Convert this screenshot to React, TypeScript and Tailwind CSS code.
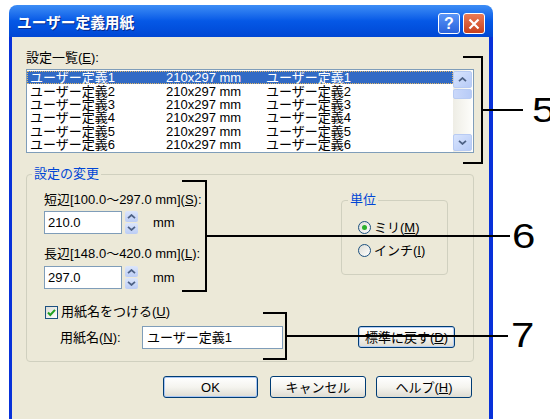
import type { ReactNode } from 'react'

const rows = [1, 2, 3, 4, 5, 6]

function Mn({ children }: { children: ReactNode }) {
  return <span className="underline underline-offset-[1px]">{children}</span>
}

function Chevron({ up = false }: { up?: boolean }) {
  return (
    <svg width="9" height="5" viewBox="0 0 9 5" className={up ? '' : 'rotate-180'}>
      <path d="M1 4.2 L4.5 1 L8 4.2" fill="none" stroke="#4D6185" strokeWidth="1.7" />
    </svg>
  )
}

function XpButton({ className = '', children }: { className?: string; children: ReactNode }) {
  return (
    <button
      type="button"
      className={`flex h-[22px] items-center justify-center rounded-[3px] border border-[#003C74] bg-linear-to-b from-white via-[#F5F4EF] to-[#DEDCD2] text-[13px] leading-none text-black ${className}`}
    >
      {children}
    </button>
  )
}

function Spinner() {
  return (
    <div className="ml-[3px] flex h-[23px] w-[13px] flex-col gap-[1px]">
      <span className="flex flex-1 items-center justify-center rounded-[2px] bg-linear-to-b from-[#DCE6FB] to-[#BCCDF5]">
        <Chevron up />
      </span>
      <span className="flex flex-1 items-center justify-center rounded-[2px] bg-linear-to-b from-[#DCE6FB] to-[#BCCDF5]">
        <Chevron />
      </span>
    </div>
  )
}

function Radio({ checked, children }: { checked?: boolean; children: ReactNode }) {
  return (
    <div className="flex h-[13px] items-center">
      <span className="flex h-[13px] w-[13px] items-center justify-center rounded-full border border-[#1C5180] bg-linear-to-br from-[#DCDCD5] to-white">
        {checked ? <span className="h-[5px] w-[5px] rounded-full bg-[#2BB02B]" /> : null}
      </span>
      <span className="ml-[3px] leading-[13px]">{children}</span>
    </div>
  )
}

export default function App() {
  return (
    <div className="relative h-[419px] w-[550px] overflow-hidden bg-white font-['Liberation_Sans','Noto_Sans_CJK_JP',sans-serif] text-[13px] text-black">
      <div className="ml-[9px] mt-[5px] w-[484px]">
        {/* Title bar */}
        <div className="flex h-[32px] items-start rounded-t-[8px] bg-linear-to-b from-[#3D8DF5] via-[#0558E6] to-[#0047D4] pl-[8px] pr-[8px]">
          <span className="mt-[9px] text-[14.7px] font-bold leading-[18px] text-white [text-shadow:1px_1px_0_#0A2A8A]">
            ユーザー定義用紙
          </span>
          <div className="ml-auto mt-[8px] flex gap-[3px]">
            <span className="flex h-[21px] w-[22px] items-center justify-center rounded-[3px] border border-white bg-linear-to-b from-[#5A95F7] to-[#2A62DC] text-[16px] font-bold leading-none text-white">
              ?
            </span>
            <span className="flex h-[21px] w-[22px] items-center justify-center rounded-[3px] border border-white bg-linear-to-b from-[#EB7A55] to-[#C7401C]">
              <svg width="12" height="12" viewBox="0 0 12 12">
                <path d="M1.5 1.5 L10.5 10.5 M10.5 1.5 L1.5 10.5" stroke="white" strokeWidth="2.2" />
              </svg>
            </span>
          </div>
        </div>

        {/* Client area */}
        <div className="h-[400px] border-l-[3px] border-r-[4px] border-[#0831D9] bg-[#ECE9D8] pl-[14px] pr-[15px] pt-[14px]">
          <div className="leading-[14px]">
            設定一覧(<Mn>E</Mn>):
          </div>

          {/* List box */}
          <div className="mt-[4px] flex h-[84px] border border-[#7F9DB9] bg-white">
            <div className="flex-1 pt-[1px]">
              {rows.map((n) => (
                <div
                  key={n}
                  className={`flex h-[13.4px] items-center leading-[13px] ${
                    n === 1 ? 'bg-[#316AC5] text-white outline-1 -outline-offset-1 outline-dotted outline-[#E2B868]' : ''
                  }`}
                >
                  <span className="w-[139px] pl-[3px]">ユーザー定義{n}</span>
                  <span className="w-[100px]">210x297 mm</span>
                  <span>ユーザー定義{n}</span>
                </div>
              ))}
            </div>
            <div className="mr-[1px] flex w-[19px] flex-col bg-linear-to-r from-[#EEEDE5] to-[#FDFDFA] py-[1px]">
              <span className="flex h-[17px] items-center justify-center rounded-[2px] border border-[#B8CBF3] bg-linear-to-br from-[#D8E4FD] to-[#B7CBF7]">
                <Chevron up />
              </span>
              <span className="mt-[1px] h-[10px] rounded-[2px] border border-[#B8CBF3] bg-linear-to-r from-[#CAD8FA] to-[#B7CBF7]" />
              <span className="flex-1" />
              <span className="flex h-[17px] items-center justify-center rounded-[2px] border border-[#B8CBF3] bg-linear-to-br from-[#D8E4FD] to-[#B7CBF7]">
                <Chevron />
              </span>
            </div>
          </div>

          {/* Settings group */}
          <fieldset className="mt-[14px] rounded-[4px] border border-[#D0D0BF] p-0">
            <legend className="ml-[5px] px-[2px] leading-[14px] text-[#0046D5]">設定の変更</legend>
            <div className="pb-[12px] pl-[17px]">
              <div className="flex">
                <div>
                  <div className="mt-[12px] leading-[14px]">
                    短辺[100.0〜297.0 mm](<Mn>S</Mn>):
                  </div>
                  <div className="mt-[4px] flex items-center">
                    <div className="flex h-[23px] w-[78px] items-center border border-[#7F9DB9] bg-white pl-[3px]">210.0</div>
                    <Spinner />
                    <span className="ml-[15px]">mm</span>
                  </div>
                  <div className="mt-[13px] leading-[14px]">
                    長辺[148.0〜420.0 mm](<Mn>L</Mn>):
                  </div>
                  <div className="mt-[5px] flex items-center">
                    <div className="flex h-[23px] w-[78px] items-center border border-[#7F9DB9] bg-white pl-[3px]">297.0</div>
                    <Spinner />
                    <span className="ml-[15px]">mm</span>
                  </div>
                </div>

                <fieldset className="ml-auto mr-[25px] mt-[12px] h-[82px] w-[107px] rounded-[4px] border border-[#D0D0BF] p-0">
                  <legend className="ml-[6px] px-[2px] leading-[14px] text-[#0046D5]">単位</legend>
                  <div className="pl-[16px]">
                    <div className="mt-[14px]">
                      <Radio checked>
                        ミリ(<Mn>M</Mn>)
                      </Radio>
                    </div>
                    <div className="mt-[10px]">
                      <Radio>
                        インチ(<Mn>I</Mn>)
                      </Radio>
                    </div>
                  </div>
                </fieldset>
              </div>

              <div className="mt-[16px] flex h-[14px] items-center">
                <span className="ml-[1px] flex h-[13px] w-[13px] items-center justify-center border border-[#1C5180] bg-linear-to-br from-[#DCDCD5] to-white">
                  <svg width="11" height="11" viewBox="0 0 11 11">
                    <path d="M2 5.5 L4.3 8 L9 2.8" fill="none" stroke="#21A121" strokeWidth="2" />
                  </svg>
                </span>
                <span className="ml-[3px] leading-[14px]">
                  用紙名をつける(<Mn>U</Mn>)
                </span>
              </div>

              <div className="mt-[7px] flex items-start">
                <span className="ml-[16px] flex h-[23px] w-[82px] items-center">
                  用紙名(<Mn>N</Mn>):
                </span>
                <div className="flex h-[23px] w-[141px] items-center border border-[#7F9DB9] bg-white pl-[4px]">ユーザー定義1</div>
                <XpButton className="ml-[75px] h-[21px] w-[97px] shadow-[inset_0_0_0_1px_#B4CDF5]">
                  標準に戻す(<Mn>D</Mn>)
                </XpButton>
              </div>
            </div>
          </fieldset>

          {/* Dialog buttons */}
          <div className="mt-[14px] flex pl-[137px]">
            <XpButton className="w-[95px] shadow-[inset_0_0_0_1px_#A9C6F4]">OK</XpButton>
            <XpButton className="ml-[12px] w-[96px]">キャンセル</XpButton>
            <XpButton className="ml-[10px] w-[96px]">
              ヘルプ(<Mn>H</Mn>)
            </XpButton>
          </div>
        </div>
      </div>

      {/* Callout 5 */}
      <div className="absolute left-[463px] top-[56px] h-[2px] w-[20px] bg-black" />
      <div className="absolute left-[481px] top-[56px] h-[108px] w-[2px] bg-black" />
      <div className="absolute left-[463px] top-[162px] h-[2px] w-[20px] bg-black" />
      <div className="absolute left-[481px] top-[109px] h-[2px] w-[42px] bg-black" />
      <div className="absolute left-[532px] top-[92px] origin-left scale-x-[1.2] text-[35px] leading-[35px]">5</div>

      {/* Callout 6 */}
      <div className="absolute left-[182px] top-[180px] h-[2px] w-[25px] bg-black" />
      <div className="absolute left-[205px] top-[180px] h-[112px] w-[2px] bg-black" />
      <div className="absolute left-[182px] top-[290px] h-[2px] w-[25px] bg-black" />
      <div className="absolute left-[205px] top-[235px] h-[2px] w-[305px] bg-black" />
      <div className="absolute left-[512px] top-[218px] origin-left scale-x-[1.2] text-[35px] leading-[35px]">6</div>

      {/* Callout 7 */}
      <div className="absolute left-[263px] top-[312px] h-[2px] w-[24px] bg-black" />
      <div className="absolute left-[285px] top-[312px] h-[48px] w-[2px] bg-black" />
      <div className="absolute left-[263px] top-[358px] h-[2px] w-[24px] bg-black" />
      <div className="absolute left-[285px] top-[335px] h-[2px] w-[223px] bg-black" />
      <div className="absolute left-[511px] top-[317px] origin-left scale-x-[1.2] text-[35px] leading-[35px]">7</div>
    </div>
  )
}
